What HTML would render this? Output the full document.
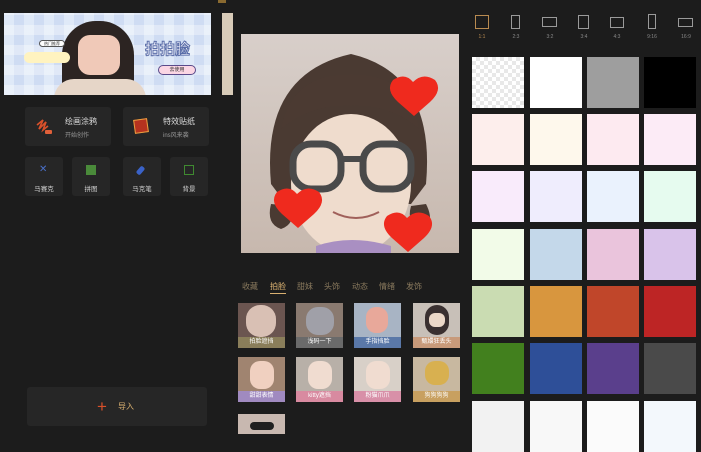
<!DOCTYPE html>
<html><head><meta charset="utf-8"><style>
*{margin:0;padding:0;box-sizing:border-box}
body{width:701px;height:434px;background:#1c1c1c;position:relative;overflow:hidden;font-family:"Liberation Sans","Noto Sans CJK SC",sans-serif;color:#cfcfcf}
.a{position:absolute}
.btn{background:#262626;border-radius:3px}
.sw{position:absolute;width:52px;height:51px}
.th{position:absolute;width:47px;height:45px;overflow:hidden}
.th .l{position:absolute;left:0;right:0;bottom:0;height:11px;font-size:6px;color:#fff;text-align:center;line-height:11px}
.tab{position:absolute;top:281px;font-size:8px;color:#8a7a5e}
.rt{position:absolute;top:34px;font-size:5px;color:#888;text-align:center;width:20px}
.ri{position:absolute;border:1.3px solid #9a9a9a}
</style></head><body>
<!-- banner -->
<div class="a" style="left:4px;top:13px;width:207px;height:82px;background:repeating-linear-gradient(90deg,#dfe9f8 0 10px,#cfdcf3 10px 20px);overflow:hidden">
 <div class="a" style="left:0;top:0;width:207px;height:82px;background:repeating-linear-gradient(0deg,rgba(255,255,255,.35) 0 10px,transparent 10px 20px)"></div>
 <div class="a" style="left:58px;top:8px;width:72px;height:78px;background:#2c2422;border-radius:34px 34px 0 0"></div>
 <div class="a" style="left:74px;top:22px;width:42px;height:40px;background:#f0c9b8;border-radius:12px"></div>
 <div class="a" style="left:50px;top:66px;width:92px;height:20px;background:#e6d6c8;border-radius:20px 20px 0 0"></div>
 <div class="a" style="left:35px;top:27px;width:26px;height:7px;background:#fff;border:1px solid #555;border-radius:4px;font-size:4px;color:#333;text-align:center;line-height:5px">热门推荐</div>
 <div class="a" style="left:20px;top:39px;width:46px;height:11px;background:#fff3c0;border-radius:6px"></div>
 <div class="a" style="left:141px;top:25px;font-size:15px;font-weight:bold;color:#f7f7ff;-webkit-text-stroke:1px #5a6da8">拍拍脸</div>
 <div class="a" style="left:154px;top:52px;width:38px;height:10px;background:#fbd6e4;border:1px solid #5a4a8a;border-radius:5px;font-size:5px;color:#333;text-align:center;line-height:8px">去使用</div>
</div>
<div class="a" style="left:222px;top:13px;width:11px;height:82px;background:#d8cbb8"></div>
<div class="a" style="left:218px;top:0;width:8px;height:3px;background:#8a6a30"></div>
<!-- big buttons -->
<div class="a btn" style="left:25px;top:107px;width:86px;height:39px">
 <svg class="a" style="left:10px;top:10px" width="20" height="20"><path d="M2 8 L8 3 L4 12 L11 5 L8 13 L13 9" stroke="#d9502a" stroke-width="1.6" fill="none"/><rect x="10" y="13" width="7" height="4" rx="1" fill="#e0603a"/></svg>
 <div class="a" style="left:40px;top:9px;font-size:8px;color:#ddd">绘画涂鸦</div>
 <div class="a" style="left:40px;top:23px;font-size:6px;color:#999">开始创作</div>
</div>
<div class="a btn" style="left:123px;top:107px;width:86px;height:39px">
 <div class="a" style="left:11px;top:12px;width:14px;height:14px;background:#b5321f;border:1px solid #e8a040;transform:rotate(-8deg)"></div>
 <div class="a" style="left:40px;top:9px;font-size:8px;color:#ddd">特效贴纸</div>
 <div class="a" style="left:40px;top:23px;font-size:6px;color:#999">ins风来袭</div>
</div>
<!-- small buttons -->
<div class="a btn" style="left:25px;top:157px;width:38px;height:39px"><div class="a" style="left:14px;top:8px;width:9px;height:9px;color:#4a70c8;font-size:10px;line-height:9px">✕</div><div class="a" style="left:0;width:38px;top:26px;font-size:6.5px;text-align:center">马赛克</div></div>
<div class="a btn" style="left:72px;top:157px;width:38px;height:39px"><div class="a" style="left:14px;top:8px;width:10px;height:10px;background:#4a8a3a"></div><div class="a" style="left:0;width:38px;top:26px;font-size:6.5px;text-align:center">拼图</div></div>
<div class="a btn" style="left:123px;top:157px;width:38px;height:39px"><div class="a" style="left:15px;top:9px;width:5px;height:9px;background:#3a62c8;transform:rotate(40deg);border-radius:2px"></div><div class="a" style="left:0;width:38px;top:26px;font-size:6.5px;text-align:center">马克笔</div></div>
<div class="a btn" style="left:170px;top:157px;width:38px;height:39px"><div class="a" style="left:14px;top:8px;width:10px;height:10px;border:1.5px solid #3f8a30"></div><div class="a" style="left:0;width:38px;top:26px;font-size:6.5px;text-align:center">背景</div></div>
<!-- import -->
<div class="a btn" style="left:27px;top:387px;width:180px;height:39px">
 <div class="a" style="left:70px;top:11px;font-size:17px;color:#d9502a;line-height:17px">+</div>
 <div class="a" style="left:91px;top:14px;font-size:8px;color:#d9b070">导入</div>
</div>
<!-- main image -->
<svg class="a" style="left:241px;top:34px" width="218" height="219" viewBox="0 0 218 219">
 <defs><linearGradient id="bg" x1="0" y1="0" x2="0" y2="1"><stop offset="0" stop-color="#d8cfca"/><stop offset="1" stop-color="#c7b8ae"/></linearGradient></defs>
 <rect width="218" height="219" fill="url(#bg)"/>
 <path d="M30 150 Q20 40 110 20 Q195 40 185 150 L170 170 L45 170Z" fill="#4a3a32"/>
 <ellipse cx="110" cy="150" rx="60" ry="70" fill="#efdccd"/>
 <path d="M40 95 Q50 40 110 40 Q170 40 178 95 Q150 70 110 72 Q70 70 40 95Z" fill="#4b3a32"/>
 <path d="M30 170 Q25 190 40 195 Q55 190 50 172Z" fill="#4a3a32"/>
 <path d="M185 170 Q195 190 180 195 Q165 190 170 172Z" fill="#4a3a32"/>
 <rect x="52" y="110" width="48" height="45" rx="18" fill="none" stroke="#4a4a4a" stroke-width="7"/>
 <rect x="122" y="110" width="48" height="45" rx="18" fill="none" stroke="#4a4a4a" stroke-width="7"/>
 <path d="M100 125 L122 125" stroke="#4a4a4a" stroke-width="6"/>
 <path d="M92 178 Q115 190 138 178" stroke="#a0605a" stroke-width="2" fill="none"/>
 <path d="M75 212 Q110 200 150 212 L150 219 L75 219Z" fill="#a98fc2"/>
 <g fill="#ef2a1e"><path d="M172 48 q-8 -10 -20 -2 q-8 10 5 22 l16 14 l16 -14 q13 -12 5 -22 q-12 -8 -22 2z"/>
 <path d="M56 160 q-8 -10 -20 -2 q-8 10 5 22 l16 14 l16 -14 q13 -12 5 -22 q-12 -8 -22 2z"/>
 <path d="M166 184 q-8 -10 -20 -2 q-8 10 5 22 l16 14 l16 -14 q13 -12 5 -22 q-12 -8 -22 2z"/></g>
</svg>
<!-- tabs -->
<div class="tab" style="left:242px">收藏</div>
<div class="tab" style="left:270px;color:#d9b070">拍脸</div>
<div class="a" style="left:270px;top:293px;width:16px;height:1px;background:#d9b070"></div>
<div class="tab" style="left:297px">甜妹</div>
<div class="tab" style="left:324px">头饰</div>
<div class="tab" style="left:352px">动态</div>
<div class="tab" style="left:379px">情绪</div>
<div class="tab" style="left:406px">发饰</div>
<!-- thumbs -->
<div class="th" style="left:238px;top:303px;background:#6b5550"><div class="a" style="left:8px;top:2px;width:30px;height:32px;background:#d9c0b4;border-radius:14px"></div><div class="l" style="background:#8a7e5a">拍脸遮挡</div></div>
<div class="th" style="left:296px;top:303px;background:#8a7a70"><div class="a" style="left:10px;top:4px;width:28px;height:28px;background:#a0a0a8;border-radius:12px"></div><div class="l" style="background:#6a6a6a">浅码一下</div></div>
<div class="th" style="left:354px;top:303px;background:#a8b4c4"><div class="a" style="left:12px;top:4px;width:22px;height:26px;background:#e8a89a;border-radius:10px"></div><div class="l" style="background:#5a78a8">手指挡脸</div></div>
<div class="th" style="left:413px;top:303px;background:#c8c0b8"><div class="a" style="left:12px;top:2px;width:24px;height:30px;background:#3a3030;border-radius:12px"></div><div class="a" style="left:16px;top:10px;width:16px;height:14px;background:#ecd8c8;border-radius:6px"></div><div class="l" style="background:#c89a7a">甄嬛狂丢头</div></div>
<div class="th" style="left:238px;top:357px;background:#a08470"><div class="a" style="left:12px;top:4px;width:24px;height:28px;background:#f0d0c0;border-radius:10px"></div><div class="l" style="background:#a08ac0">甜甜表情</div></div>
<div class="th" style="left:296px;top:357px;background:#b8b0a8"><div class="a" style="left:12px;top:4px;width:24px;height:28px;background:#f0dcd0;border-radius:10px"></div><div class="l" style="background:#d88aa0">kitty遮挡</div></div>
<div class="th" style="left:354px;top:357px;background:#d8d0c8"><div class="a" style="left:12px;top:4px;width:24px;height:28px;background:#f0dcd0;border-radius:10px"></div><div class="l" style="background:#d890a8">粉猫爪爪</div></div>
<div class="th" style="left:413px;top:357px;background:#c8b8a0"><div class="a" style="left:12px;top:4px;width:24px;height:24px;background:#d8b050;border-radius:10px"></div><div class="l" style="background:#c8a060">狗狗狗狗</div></div>
<div class="th" style="left:238px;top:414px;height:20px;background:#c8b8b0"><div class="a" style="left:12px;top:8px;width:24px;height:8px;background:#202020;border-radius:4px"></div></div>
<!-- ratios -->
<div class="ri" style="left:475px;top:15px;width:14px;height:14px;border-color:#b88a50"></div>
<div class="ri" style="left:511px;top:15px;width:9px;height:14px"></div>
<div class="ri" style="left:542px;top:17px;width:15px;height:10px"></div>
<div class="ri" style="left:578px;top:15px;width:11px;height:14px"></div>
<div class="ri" style="left:610px;top:17px;width:14px;height:11px"></div>
<div class="ri" style="left:648px;top:14px;width:8px;height:15px"></div>
<div class="ri" style="left:678px;top:18px;width:15px;height:9px"></div>
<div class="rt" style="left:472px;color:#b88a50">1:1</div>
<div class="rt" style="left:506px">2:3</div>
<div class="rt" style="left:540px">3:2</div>
<div class="rt" style="left:574px">3:4</div>
<div class="rt" style="left:607px">4:3</div>
<div class="rt" style="left:642px">9:16</div>
<div class="rt" style="left:676px">16:9</div>
<!-- swatches -->
<div class="sw" style="left:472px;top:57px;background:repeating-conic-gradient(#e8e8e8 0 25%,#fff 0 50%) 0 0/8px 8px"></div>
<div class="sw" style="left:530px;top:57px;background:#fff"></div>
<div class="sw" style="left:587px;top:57px;background:#9e9e9e"></div>
<div class="sw" style="left:644px;top:57px;background:#000"></div>
<div class="sw" style="left:472px;top:114px;background:#fdeeec"></div>
<div class="sw" style="left:530px;top:114px;background:#fef8ec"></div>
<div class="sw" style="left:587px;top:114px;background:#fdeaf0"></div>
<div class="sw" style="left:644px;top:114px;background:#fcebf6"></div>
<div class="sw" style="left:472px;top:171px;background:#f9ebfb"></div>
<div class="sw" style="left:530px;top:171px;background:#efedfd"></div>
<div class="sw" style="left:587px;top:171px;background:#eaf2fd"></div>
<div class="sw" style="left:644px;top:171px;background:#e6fbef"></div>
<div class="sw" style="left:472px;top:229px;background:#f2fbe8"></div>
<div class="sw" style="left:530px;top:229px;background:#c4d8ea"></div>
<div class="sw" style="left:587px;top:229px;background:#eac4dc"></div>
<div class="sw" style="left:644px;top:229px;background:#d9c3ea"></div>
<div class="sw" style="left:472px;top:286px;background:#cadcb2"></div>
<div class="sw" style="left:530px;top:286px;background:#d8963e"></div>
<div class="sw" style="left:587px;top:286px;background:#c0462a"></div>
<div class="sw" style="left:644px;top:286px;background:#bd2525"></div>
<div class="sw" style="left:472px;top:343px;background:#42801e"></div>
<div class="sw" style="left:530px;top:343px;background:#2e4f98"></div>
<div class="sw" style="left:587px;top:343px;background:#5a3f8c"></div>
<div class="sw" style="left:644px;top:343px;background:#4a4a4a"></div>
<div class="sw" style="left:472px;top:401px;background:#f2f2f2"></div>
<div class="sw" style="left:530px;top:401px;background:#f8f8f8"></div>
<div class="sw" style="left:587px;top:401px;background:#fbfbfb"></div>
<div class="sw" style="left:644px;top:401px;background:#f3f8fc"></div>
</body></html>
